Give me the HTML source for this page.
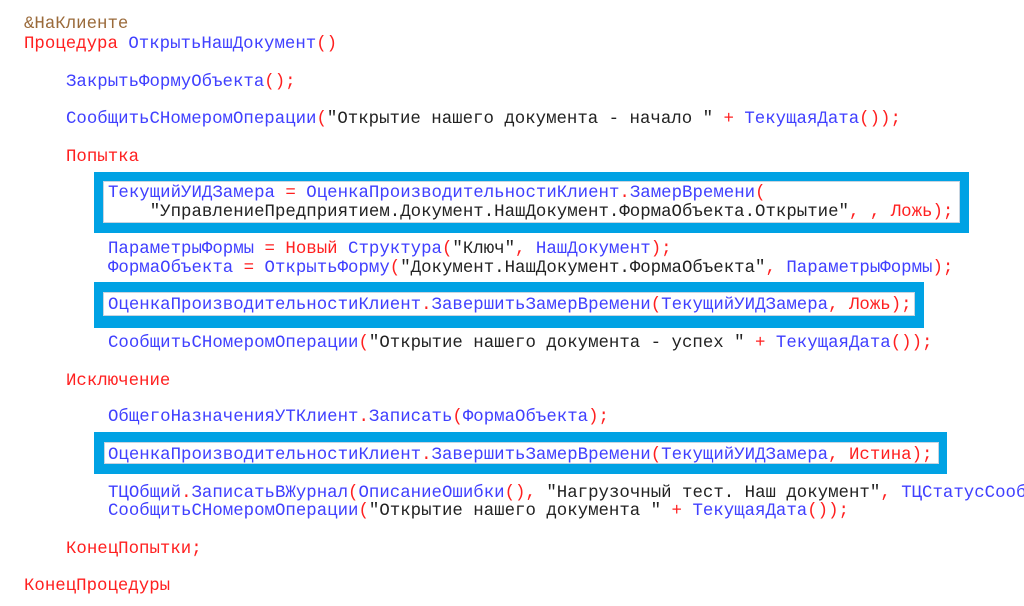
<!DOCTYPE html>
<html style="overflow:hidden;width:1024px;height:606px"><head><meta charset="utf-8"><style>
body{margin:0;width:1024px;height:606px;overflow:hidden;background:#fff;position:relative;font-family:"Liberation Mono","Noto Sans CJK SC",monospace;font-size:17.4px;}
.l{position:absolute;white-space:pre;line-height:19px;height:19px;}
.b{color:#4040ff}.r{color:#ff2020}.k{color:#222}.br{color:#9a6a3a}
.box{position:absolute;background:#00a2e4;}
.in{position:absolute;background:#fff;border:1px solid #c8d4e0;}
</style></head><body>
<div class="box" style="left:94px;top:172px;width:875px;height:61px"></div>
<div class="in" style="left:103px;top:181px;width:855px;height:40px"></div>
<div class="box" style="left:94px;top:282px;width:830px;height:46px"></div>
<div class="in" style="left:103px;top:292px;width:810px;height:22px"></div>
<div class="box" style="left:94px;top:432px;width:853px;height:42px"></div>
<div class="in" style="left:104px;top:442px;width:833px;height:20px"></div>

<div class="l br" style="left:24px;top:15px">&amp;НаКлиенте</div>
<div class="l" style="left:24px;top:35px"><span class="r">Процедура </span><span class="b">ОткрытьНашДокумент</span><span class="r">()</span></div>
<div class="l" style="left:66px;top:73px"><span class="b">ЗакрытьФормуОбъекта</span><span class="r">();</span></div>
<div class="l" style="left:66px;top:110px"><span class="b">СообщитьСНомеромОперации</span><span class="r">(</span><span class="k">"Открытие нашего документа - начало "</span><span class="r"> + </span><span class="b">ТекущаяДата</span><span class="r">());</span></div>
<div class="l r" style="left:66px;top:148px">Попытка</div>
<div class="l" style="left:108px;top:184px"><span class="b">ТекущийУИДЗамера</span><span class="r"> = </span><span class="b">ОценкаПроизводительностиКлиент</span><span class="r">.</span><span class="b">ЗамерВремени</span><span class="r">(</span></div>
<div class="l" style="left:108px;top:203px"><span class="k">    "УправлениеПредприятием.Документ.НашДокумент.ФормаОбъекта.Открытие"</span><span class="r">, , Ложь);</span></div>
<div class="l" style="left:108px;top:240px"><span class="b">ПараметрыФормы</span><span class="r"> = Новый </span><span class="b">Структура</span><span class="r">(</span><span class="k">"Ключ"</span><span class="r">, </span><span class="b">НашДокумент</span><span class="r">);</span></div>
<div class="l" style="left:108px;top:259px"><span class="b">ФормаОбъекта</span><span class="r"> = </span><span class="b">ОткрытьФорму</span><span class="r">(</span><span class="k">"Документ.НашДокумент.ФормаОбъекта"</span><span class="r">, </span><span class="b">ПараметрыФормы</span><span class="r">);</span></div>
<div class="l" style="left:108px;top:296px"><span class="b">ОценкаПроизводительностиКлиент</span><span class="r">.</span><span class="b">ЗавершитьЗамерВремени</span><span class="r">(</span><span class="b">ТекущийУИДЗамера</span><span class="r">, Ложь);</span></div>
<div class="l" style="left:108px;top:334px"><span class="b">СообщитьСНомеромОперации</span><span class="r">(</span><span class="k">"Открытие нашего документа - успех "</span><span class="r"> + </span><span class="b">ТекущаяДата</span><span class="r">());</span></div>
<div class="l r" style="left:66px;top:372px">Исключение</div>
<div class="l" style="left:108px;top:408px"><span class="b">ОбщегоНазначенияУТКлиент</span><span class="r">.</span><span class="b">Записать</span><span class="r">(</span><span class="b">ФормаОбъекта</span><span class="r">);</span></div>
<div class="l" style="left:108px;top:446px"><span class="b">ОценкаПроизводительностиКлиент</span><span class="r">.</span><span class="b">ЗавершитьЗамерВремени</span><span class="r">(</span><span class="b">ТекущийУИДЗамера</span><span class="r">, Истина);</span></div>
<div class="l" style="left:108px;top:484px"><span class="b">ТЦОбщий</span><span class="r">.</span><span class="b">ЗаписатьВЖурнал</span><span class="r">(</span><span class="b">ОписаниеОшибки</span><span class="r">(), </span><span class="k">"Нагрузочный тест. Наш документ"</span><span class="r">, </span><span class="b">ТЦСтатусСооб</span></div>
<div class="l" style="left:108px;top:502px"><span class="b">СообщитьСНомеромОперации</span><span class="r">(</span><span class="k">"Открытие нашего документа "</span><span class="r"> + </span><span class="b">ТекущаяДата</span><span class="r">());</span></div>
<div class="l r" style="left:66px;top:540px">КонецПопытки;</div>
<div class="l r" style="left:24px;top:577px">КонецПроцедуры</div>
</body></html>
